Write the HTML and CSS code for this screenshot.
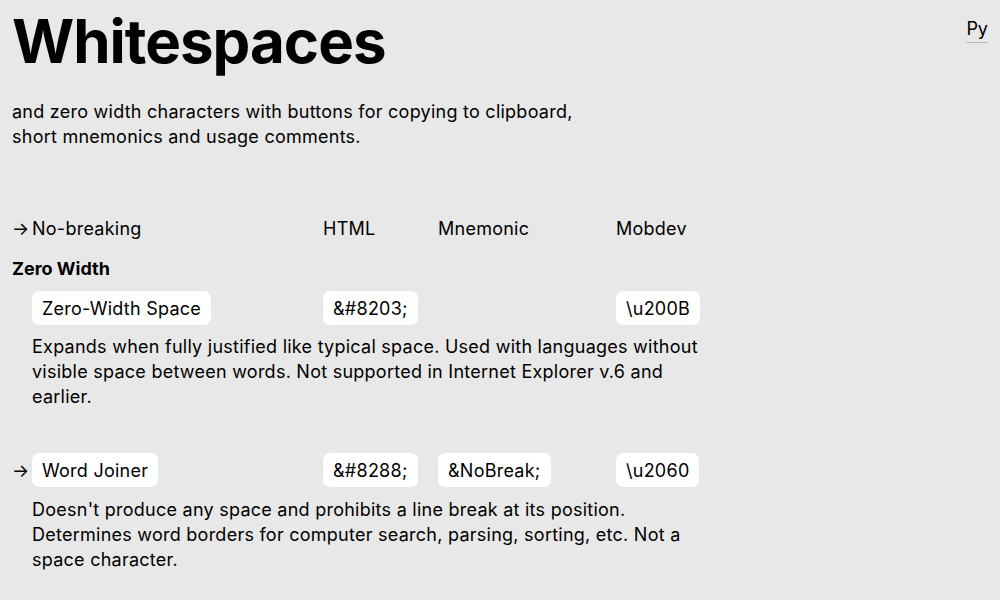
FILE: index.html
```html
<!DOCTYPE html>
<html lang="en">
<head>
<meta charset="utf-8">
<title>Whitespaces</title>
<link rel="stylesheet" href="styles.css">
</head>
<body>
<header class="top">
  <h1 class="title">Whitespaces</h1>
  <a class="lang" href="#">Py</a>
</header>
<p class="lead">and zero width characters with buttons for copying to clipboard,<br>short mnemonics and usage comments.</p>

<div class="table">
  <div class="row head">
    <span class="arrow">→</span>
    <span class="cell">No-breaking</span>
    <span class="cell">HTML</span>
    <span class="cell">Mnemonic</span>
    <span class="cell">Mobdev</span>
  </div>
  <div class="group">Zero Width</div>
  <div class="row item">
    <span class="arrow"></span>
    <span class="cell"><button class="pill">Zero-Width Space</button></span>
    <span class="cell"><button class="pill">&amp;#8203;</button></span>
    <span class="cell"></span>
    <span class="cell"><button class="pill">\u200B</button></span>
  </div>
  <p class="desc">Expands when fully justified like typical space. Used with languages without visible space between words. Not supported in Internet Explorer v.6 and earlier.</p>
  <div class="row item">
    <span class="arrow">→</span>
    <span class="cell"><button class="pill">Word Joiner</button></span>
    <span class="cell"><button class="pill">&amp;#8288;</button></span>
    <span class="cell"><button class="pill">&amp;NoBreak;</button></span>
    <span class="cell"><button class="pill">\u2060</button></span>
  </div>
  <p class="desc">Doesn't produce any space and prohibits a line break at its position. Determines word borders for computer search, parsing, sorting, etc. Not a space character.</p>
</div>
</body>
</html>
```
FILE: styles.css
```css
html, body {
  margin: 0;
  padding: 0;
  background: #e8e8e8;
  color: #000;
  font-family: Inter, "Liberation Sans", sans-serif;
}
body {
  padding: 0 12px;
}
.top {
  display: flex;
  justify-content: space-between;
  align-items: flex-start;
}
.title {
  margin: 5px 0 0;
  font-size: 60px;
  font-weight: 700;
  letter-spacing: -1px;
  line-height: 72px;
}
.lang {
  margin-top: 18px;
  color: #000;
  text-decoration: none;
  font-size: 18px;
  line-height: 22px;
  border-bottom: 1px solid #b8b8b8;
  padding-bottom: 2px;
}
.lead {
  margin: 22px 0 0;
  font-size: 18px;
  line-height: 25px;
  letter-spacing: 0.25px;
}
.table {
  margin-top: 67px;
  width: 700px;
  font-size: 18px;
  letter-spacing: 0.25px;
}
.row {
  display: grid;
  grid-template-columns: 20px 291px 115px 178px auto;
  align-items: center;
}
.head {
  height: 25px;
}
.group {
  margin-top: 15px;
  font-weight: 700;
  line-height: 25px;
  letter-spacing: 0;
}
.item {
  margin-top: 10px;
  height: 34px;
}
.arrow {
  font-size: 18px;
}
.pill {
  font: inherit;
  letter-spacing: inherit;
  color: #000;
  background: #fff;
  border: 0;
  border-radius: 7px;
  height: 34px;
  padding: 0 10px;
  cursor: pointer;
}
.desc {
  margin: 9px 0 0 20px;
  line-height: 25px;
  width: 672px;
}
.desc + .row {
  margin-top: 44px;
}
.desc + .row + .desc {
  margin-top: 10px;
}
```
